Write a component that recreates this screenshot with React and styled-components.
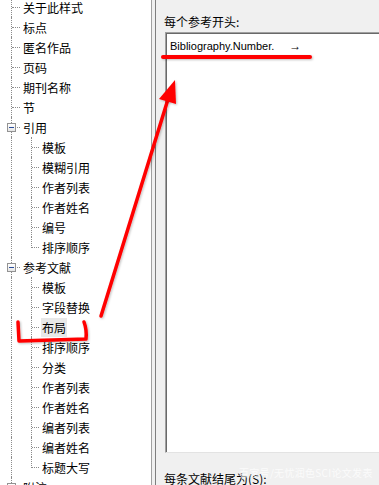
import React from "react";
import styled, { createGlobalStyle } from "styled-components";

const GlobalStyle = createGlobalStyle`
  html, body {
    margin: 0;
    padding: 0;
    background: #f0f0f0;
  }
  body {
    font-family: "Noto Sans CJK SC", "Microsoft YaHei", sans-serif;
    color: #000;
  }
`;

const TREE = [
  { label: "关于此样式" },
  { label: "标点" },
  { label: "匿名作品" },
  { label: "页码" },
  { label: "期刊名称" },
  { label: "节" },
  {
    label: "引用",
    children: ["模板", "模糊引用", "作者列表", "作者姓名", "编号", "排序顺序"],
  },
  {
    label: "参考文献",
    children: [
      "模板",
      "字段替换",
      "布局",
      "排序顺序",
      "分类",
      "作者列表",
      "作者姓名",
      "编者列表",
      "编者姓名",
      "标题大写",
    ],
  },
  { label: "附注", collapsed: true },
];

const SELECTED = "参考文献/布局";

const TreeNode = ({ node }) => {
  const hasChildren = node.children || node.collapsed;
  return (
    <>
      <Row>
        <Gutter>
          <Stem />
          <Branch />
          {hasChildren && (
            <Toggle>
              <Minus />
              {node.collapsed && <Plus />}
            </Toggle>
          )}
        </Gutter>
        <Label>{node.label}</Label>
      </Row>
      {node.children &&
        node.children.map((child, i) => (
          <Row key={i}>
            <Gutter>
              <Stem />
            </Gutter>
            <Gutter $width={19}>
              <Stem $last={i === node.children.length - 1} />
              <Branch />
            </Gutter>
            <Label $selected={`${node.label}/${child}` === SELECTED}>
              {child}
            </Label>
          </Row>
        ))}
    </>
  );
};

export default function App() {
  return (
    <>
      <GlobalStyle />
      <Window>
        <TreePanel>
          <TreeList>
            {TREE.map((node, i) => (
              <TreeNode key={i} node={node} />
            ))}
          </TreeList>
        </TreePanel>
        <Splitter />
        <RightPanel>
          <FieldLabel>每个参考开头:</FieldLabel>
          <TextBox>
            <FieldText>
              Bibliography.Number.
              <TabMark>→</TabMark>
            </FieldText>
          </TextBox>
          <FieldLabel $gap={18}>每条文献结尾为(S):</FieldLabel>
          <Watermark>百家号/无忧润色SCI论文发表</Watermark>
        </RightPanel>

        <Annotations viewBox="0 0 379 485" width="379" height="485">
          <defs>
            <filter id="soft" x="-20%" y="-20%" width="140%" height="140%">
              <feDropShadow
                dx="1"
                dy="1"
                stdDeviation="1.2"
                floodColor="#000"
                floodOpacity="0.25"
              />
            </filter>
          </defs>
          <g filter="url(#soft)" fill="none" stroke="#ff0000" strokeLinecap="round">
            <line x1="163" y1="57" x2="310" y2="57" strokeWidth="4" />
            <line x1="101" y1="316" x2="169" y2="96" strokeWidth="3.5" />
            <path
              d="M18 322 L19 341 L86 339 Q87 330 84 322"
              strokeWidth="3.5"
              strokeLinejoin="round"
            />
          </g>
          <polygon
            points="175,80 159,99 176,104"
            fill="#ff0000"
            filter="url(#soft)"
          />
        </Annotations>
      </Window>
    </>
  );
}

const Window = styled.div`
  position: relative;
  display: flex;
  width: 379px;
  height: 485px;
  overflow: hidden;
  background: #f0f0f0;
`;

const TreePanel = styled.div`
  width: 151px;
  flex-shrink: 0;
  background: #fff;
  border-right: 1px solid #a0a0a0;
  overflow: hidden;
`;

const TreeList = styled.div`
  display: flex;
  flex-direction: column;
  margin-top: -3px;
`;

const Row = styled.div`
  display: flex;
  align-items: center;
  height: 20px;
`;

const Gutter = styled.div`
  position: relative;
  display: flex;
  align-items: center;
  align-self: stretch;
  width: ${(p) => p.$width || 20}px;
  flex-shrink: 0;
  padding-left: 11px;
  box-sizing: border-box;
`;

const Stem = styled.span`
  width: 0;
  border-left: 1px dotted #8c8c8c;
  align-self: ${(p) => (p.$last ? "flex-start" : "stretch")};
  height: ${(p) => (p.$last ? "11px" : "auto")};
`;

const Branch = styled.span`
  flex: 1;
  height: 0;
  border-top: 1px dotted #8c8c8c;
  margin-top: 1px;
`;

const Toggle = styled.span`
  position: absolute;
  left: 7px;
  top: 6px;
  width: 9px;
  height: 9px;
  box-sizing: border-box;
  border: 1px solid #939393;
  background: linear-gradient(#ffffff, #e6e6e6);
  display: flex;
  align-items: center;
  justify-content: center;
`;

const Minus = styled.span`
  width: 5px;
  height: 1px;
  background: #2a4d9b;
`;

const Plus = styled.span`
  position: absolute;
  width: 1px;
  height: 5px;
  background: #2a4d9b;
`;

const Label = styled.span`
  margin-left: 2px;
  padding: 0 1px;
  height: 19px;
  line-height: 19px;
  font-size: 12px;
  white-space: nowrap;
  background: ${(p) => (p.$selected ? "#e8e8e8" : "transparent")};
`;

const Splitter = styled.div`
  width: 3px;
  flex-shrink: 0;
  background: #f0f0f0;
`;

const RightPanel = styled.div`
  position: relative;
  flex: 1;
  display: flex;
  flex-direction: column;
  border-left: 1px solid #7e7e7e;
  padding-left: 8px;
  overflow: hidden;
`;

const FieldLabel = styled.div`
  margin-top: ${(p) => p.$gap ?? 14}px;
  height: 16px;
  line-height: 16px;
  font-size: 12px;
  white-space: nowrap;
`;

const TextBox = styled.div`
  margin-top: 2px;
  margin-left: 1px;
  width: 260px;
  height: 421px;
  flex-shrink: 0;
  box-sizing: border-box;
  background: #fff;
  border-top: 1px solid #a0a0a0;
  border-left: 1px solid #a0a0a0;
  border-bottom: 1px solid #e3e3e3;
  box-shadow: inset 1px 1px 0 #696969;
  padding: 6px 0 0 4px;
`;

const FieldText = styled.div`
  font-family: "Liberation Sans", Arial, sans-serif;
  font-size: 11px;
  line-height: 14px;
  white-space: nowrap;
`;

const TabMark = styled.span`
  margin-left: 15px;
  font-size: 12px;
`;

const Watermark = styled.span`
  position: absolute;
  left: 83px;
  top: 465px;
  font-size: 10px;
  letter-spacing: 0.3px;
  color: rgba(255, 255, 255, 0.75);
  white-space: nowrap;
`;

const Annotations = styled.svg`
  position: absolute;
  left: 0;
  top: 0;
  pointer-events: none;
`;
